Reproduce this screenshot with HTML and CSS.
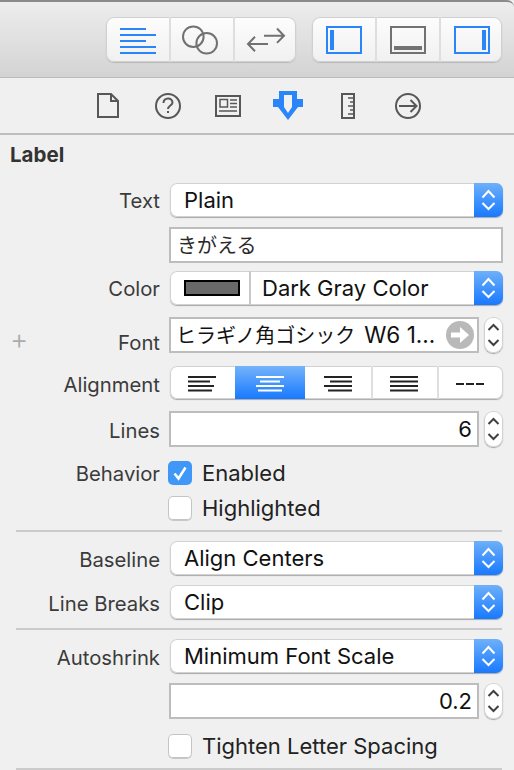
FILE: index.html
```html
<!DOCTYPE html>
<html lang="en">
<head>
<meta charset="utf-8">
<title>Label inspector</title>
<link rel="stylesheet" href="styles.css">
</head>
<body>
<div class="window">
  <header class="toolbar">
    <div class="seg-group">
      <div class="tool-cell"><svg viewBox="106 17 65 45" class="tool-svg"><path d="M120 29h26M120 35h36M120 41h26M120 47h36M120 53h36" class="s-blue"/></svg></div>
      <div class="tool-cell"><svg viewBox="171 17 64 45" class="tool-svg"><circle cx="193.3" cy="36.7" r="10.3" class="s-gray"/><circle cx="206.7" cy="43.3" r="10.3" class="s-gray"/></svg></div>
      <div class="tool-cell tool-cell-last"><svg viewBox="235 17 61 45" class="tool-svg"><path d="M264 35.7h19.500M277 28.500l7 7.200-7 7.200M268 44h-19.500M255 36.800l-7 7.200 7 7.200" class="s-gray"/></svg></div>
    </div>
    <div class="seg-group">
      <div class="tool-cell"><svg viewBox="312 17 65 45" class="tool-svg"><rect x="327" y="27" width="34" height="26" class="s-blue"/><rect x="330" y="30" width="4" height="20" class="f-blue"/></svg></div>
      <div class="tool-cell"><svg viewBox="377 17 64 45" class="tool-svg"><rect x="391" y="27" width="34" height="26" class="s-gray"/><rect x="394" y="46" width="28" height="4" class="f-gray"/></svg></div>
      <div class="tool-cell tool-cell-last"><svg viewBox="441 17 61 45" class="tool-svg"><rect x="455" y="27" width="34" height="26" class="s-blue"/><rect x="482" y="30" width="4" height="20" class="f-blue"/></svg></div>
    </div>
  </header>

  <nav class="tabs">
    <svg viewBox="78 88 60 36" class="tab-svg"><path d="M98 94h13l7 7v16H98zM111 94v7h7" class="s-dark"/></svg>
    <svg viewBox="138 88 60 36" class="tab-svg"><circle cx="168" cy="106" r="12" class="s-dark"/><path d="M163.500 103c0-6 9-6 9 -.500 0 3-4.500 3-4.500 6.500" class="s-dark"/><rect x="167" y="111" width="2" height="2" class="f-dark"/></svg>
    <svg viewBox="198 88 60 36" class="tab-svg"><rect x="216" y="96" width="24" height="20" class="s-dark"/><rect x="220" y="99.500" width="7.500" height="7.500" class="s-dark-thin"/><path d="M230 100h7M230 103.500h7M230 107h7M219 111h18" class="s-dark-thin"/></svg>
    <svg viewBox="258 88 60 36" class="tab-svg"><path d="M279 91H297V99H303V107H298L288 120L278 107H273V99H279ZM284 95V107L288 113L292 107V95Z" class="f-blue-odd"/></svg>
    <svg viewBox="318 88 60 36" class="tab-svg"><rect x="342" y="94" width="12" height="24" class="s-dark"/><path d="M348 98h5M350 102h3M348 106h5M350 110h3M348 114h5" class="s-dark-thin"/></svg>
    <svg viewBox="378 88 60 36" class="tab-svg"><circle cx="408" cy="106" r="12" class="s-dark"/><path d="M399 106h17M410.500 100l6 6-6 6" class="s-dark"/></svg>
  </nav>

  <main class="inspector">
    <h1 class="section-title">Label</h1>

    <div class="row row-text">
      <span class="label">Text</span>
      <div class="select"><span class="select-value">Plain</span><span class="select-arrows"><svg viewBox="0 0 29 34" class="arrows-svg"><path d="M8.500 14.500l6-6.500 6 6.500M8.500 20l6 6 6-6"/></svg></span></div>
    </div>

    <div class="row row-gap-10">
      <span class="label"></span>
      <div class="field field-full">きがえる</div>
    </div>

    <div class="row row-gap-8">
      <span class="label">Color</span>
      <div class="select">
        <span class="swatch-cell"><span class="swatch"></span></span>
        <span class="select-value select-value-color">Dark Gray Color</span>
        <span class="select-arrows"><svg viewBox="0 0 29 34" class="arrows-svg"><path d="M8.500 14.500l6-6.500 6 6.500M8.500 20l6 6 6-6"/></svg></span>
      </div>
    </div>

    <div class="row row-gap-12 row-font">
      <span class="plus">+</span>
      <span class="label label-low">Font</span>
      <div class="combo">
        <div class="field field-font"><span class="font-name">ヒラギノ角ゴシック<span class="font-latin">W6 1...</span></span><svg viewBox="0 0 28 28" class="go-svg"><circle cx="14" cy="14" r="14" class="go-disc"/><path d="M5 11.500h9V6l9 8-9 8v-5.500H5z" class="go-arrow"/></svg></div>
        <div class="stepper"><svg viewBox="0 0 19 36" class="stepper-svg"><path d="M4.500 13l5-5 5 5M4.500 23l5 5 5-5"/></svg></div>
      </div>
    </div>

    <div class="row row-gap-13 row-align">
      <span class="label label-down">Alignment</span>
      <div class="align-group">
        <div class="align-cell align-first"><svg viewBox="0 0 65 33" class="align-svg"><path d="M18 11h28M18 15.500h22M18 20h26M18 24.500h24"/></svg></div>
        <div class="align-cell align-on"><svg viewBox="0 0 70 33" class="align-svg-w"><path d="M21 11h28M25 15.500h20M21 20h28M23 24.500h24"/></svg></div>
        <div class="align-cell align-mid"><svg viewBox="0 0 68 33" class="align-svg"><path d="M19 11h28M25 15.500h22M19 20h28M23 24.500h24"/></svg></div>
        <div class="align-cell align-mid"><svg viewBox="0 0 66 33" class="align-svg"><path d="M17 11h28M17 15.500h28M17 20h28M17 24.500h28"/></svg></div>
        <div class="align-cell"><svg viewBox="0 0 63 33" class="align-svg"><path d="M17 18h8M27 18h8M37 18h8"/></svg></div>
      </div>
    </div>

    <div class="row row-gap-12">
      <span class="label label-down">Lines</span>
      <div class="combo">
        <div class="field field-num">6</div>
        <div class="stepper"><svg viewBox="0 0 19 36" class="stepper-svg"><path d="M4.500 13l5-5 5 5M4.500 23l5 5 5-5"/></svg></div>
      </div>
    </div>

    <div class="row row-check row-gap-13">
      <span class="label">Behavior</span>
      <div class="check-line"><span class="check check-on"><svg viewBox="0 0 24 24" class="check-svg"><path d="M6.500 12.500l4 5 7-11"/></svg></span><span class="check-text">Enabled</span></div>
    </div>

    <div class="row row-check row-gap-12">
      <span class="label"></span>
      <div class="check-line"><span class="check"></span><span class="check-text">Highlighted</span></div>
    </div>

    <hr class="divider divider-a">

    <div class="row">
      <span class="label label-down">Baseline</span>
      <div class="select"><span class="select-value">Align Centers</span><span class="select-arrows"><svg viewBox="0 0 29 34" class="arrows-svg"><path d="M8.500 14.500l6-6.500 6 6.500M8.500 20l6 6 6-6"/></svg></span></div>
    </div>

    <div class="row row-gap-10">
      <span class="label label-down">Line Breaks</span>
      <div class="select"><span class="select-value">Clip</span><span class="select-arrows"><svg viewBox="0 0 29 34" class="arrows-svg"><path d="M8.500 14.500l6-6.500 6 6.500M8.500 20l6 6 6-6"/></svg></span></div>
    </div>

    <hr class="divider divider-b">

    <div class="row">
      <span class="label label-down">Autoshrink</span>
      <div class="select"><span class="select-value">Minimum Font Scale</span><span class="select-arrows"><svg viewBox="0 0 29 34" class="arrows-svg"><path d="M8.500 14.500l6-6.500 6 6.500M8.500 20l6 6 6-6"/></svg></span></div>
    </div>

    <div class="row row-gap-10">
      <span class="label"></span>
      <div class="combo">
        <div class="field field-num">0.2</div>
        <div class="stepper"><svg viewBox="0 0 19 36" class="stepper-svg"><path d="M4.500 13l5-5 5 5M4.500 23l5 5 5-5"/></svg></div>
      </div>
    </div>

    <div class="row row-check row-gap-15">
      <span class="label"></span>
      <div class="check-line"><span class="check"></span><span class="check-text">Tighten Letter Spacing</span></div>
    </div>

    <hr class="divider divider-c">
  </main>
</div>
</body>
</html>
```

FILE: styles.css
```css
* { box-sizing: border-box; }

html, body {
  margin: 0;
  padding: 0;
  background: #f0f0f0;
}

body {
  width: 514px;
  height: 770px;
  overflow: hidden;
  font-family: Inter, "Noto Sans CJK JP", sans-serif;
  color: #1c1c1c;
}

/* Toolbar */
.toolbar {
  height: 78px;
  display: flex;
  gap: 16px;
  padding: 15px 0 0 106px;
  border-top: 2px solid #8b8b8b;
  border-bottom: 1px solid #b9b9b9;
  border-top-right-radius: 7px;
  background: linear-gradient(#ededed, #d3d3d3);
}

.seg-group {
  width: 190px;
  height: 45px;
  display: grid;
  grid-template-columns: 65px 64px 61px;
  border-radius: 8px;
  background: linear-gradient(#fdfdfd, #f0f0f0);
  box-shadow: inset 0 0 0 1px #d0d0d0, 0 1px 1px #b8b8b8;
}

.tool-cell { box-shadow: inset -2px 0 0 #dedede; }
.tool-cell-last { box-shadow: none; }
.tool-svg { display: block; width: 100%; height: 45px; }

.s-blue, .s-gray, .s-dark, .s-dark-thin { fill: none; stroke-width: 2; }
.s-blue { stroke: #2a85fb; }
.s-gray { stroke: #717171; }
.s-dark { stroke: #575757; }
.s-dark-thin { stroke: #575757; stroke-width: 1.5; }
.f-blue { fill: #2a85fb; }
.f-gray { fill: #717171; }
.f-dark { fill: #575757; }
.f-blue-odd { fill: #2a85fb; fill-rule: evenodd; }

/* Inspector tabs */
.tabs {
  height: 57px;
  display: flex;
  padding: 10px 0 0 78px;
  border-bottom: 2px solid #bdbdbd;
  align-items: flex-start;
}

.tab-svg { display: block; width: 60px; height: 36px; flex: none; }

/* Inspector body */
.inspector {
  position: relative;
  padding: 8px 11px 0 0;
}

.section-title {
  margin: 0 0 16px 10px;
  height: 24px;
  font-size: 20.500px;
  line-height: 24px;
  font-weight: 700;
  color: #333;
}

.row {
  display: grid;
  grid-template-columns: 160px 334px;
  column-gap: 9px;
  align-items: center;
}

.row-gap-8 { margin-top: 8px; }
.row-gap-10 { margin-top: 10px; }
.row-gap-12 { margin-top: 12px; }
.row-gap-13 { margin-top: 13px; }
.row-gap-15 { margin-top: 15px; }

.row-font { position: relative; }

.label {
  display: block;
  text-align: right;
  font-size: 20.300px;
  line-height: 24px;
  padding-top: 2px;
  color: #3b3b3b;
}

.label-down { padding-top: 4px; }

.label-low {
  padding-top: 16px;
  line-height: 20px;
}

.plus {
  position: absolute;
  left: 10px;
  top: 7px;
  font-size: 28px;
  line-height: 30px;
  color: #ababab;
  font-weight: 300;
}

/* Popup select */
.select {
  height: 34px;
  margin-left: 1px;
  display: flex;
  align-items: center;
  border-radius: 7px;
  background: #fff;
  overflow: hidden;
  box-shadow: inset 0 0 0 1px #d2d2d2, 0 1px 1px #a8a8a8;
}

.select-value {
  flex: 1;
  padding-left: 14px;
  font-size: 22px;
  line-height: 34px;
  white-space: nowrap;
  color: #111;
}

.select-value-color { padding-left: 11px; }

.select-arrows {
  width: 29px;
  height: 34px;
  flex: none;
  background: linear-gradient(#6eb0fa, #1879ff);
}

.arrows-svg {
  display: block;
  width: 29px;
  height: 34px;
  fill: none;
  stroke: #fff;
  stroke-width: 2;
}

.swatch-cell {
  width: 81px;
  height: 34px;
  flex: none;
  display: flex;
  align-items: center;
  padding-left: 14px;
  border-right: 2px solid #c9c9c9;
}

.swatch {
  width: 56px;
  height: 16px;
  background: #686868;
  border: 2px solid #000;
}

/* Text fields */
.field {
  height: 36px;
  background: #fff;
  border: 2px solid #bdbdbd;
  font-size: 22px;
  line-height: 32px;
  color: #111;
  white-space: nowrap;
}

.field-full {
  padding-left: 6px;
  font-size: 20px;
  line-height: 35px;
  color: #2a2a2a;
}

.field-num {
  flex: 1;
  text-align: right;
  padding-right: 5px;
}

.field-font {
  flex: 1;
  display: flex;
  align-items: center;
  justify-content: space-between;
  padding: 0 3px 0 5px;
  font-size: 20px;
}

.font-name { color: #111; }
.font-latin { font-size: 22.500px; margin-left: 9px; }
.go-svg { width: 28px; height: 28px; flex: none; }
.go-disc { fill: #b9b9b9; }
.go-arrow { fill: #fff; }

.combo {
  display: flex;
  gap: 5px;
  align-items: center;
}

.stepper {
  width: 19px;
  height: 36px;
  flex: none;
  border-radius: 9px;
  background: #fff;
  box-shadow: inset 0 0 0 1px #d2d2d2, 0 1px 1px #a8a8a8;
}

.stepper-svg {
  display: block;
  width: 19px;
  height: 36px;
  fill: none;
  stroke: #404040;
  stroke-width: 2;
}

/* Alignment segments */
.align-group {
  height: 33px;
  margin-left: 1px;
  display: grid;
  grid-template-columns: 65px 70px 68px 66px 63px;
  border-radius: 7px;
  overflow: hidden;
  background: #fff;
  box-shadow: inset 0 0 0 1px #d2d2d2, 0 1px 1px #a8a8a8;
}

.align-on { background: linear-gradient(#74b3fb, #1879ff); }
.align-mid { box-shadow: inset -2px 0 0 #dfdfdf; }

.align-svg, .align-svg-w {
  display: block;
  width: 100%;
  height: 33px;
  fill: none;
  stroke-width: 2;
}

.align-svg { stroke: #232323; }
.align-svg-w { stroke: #fff; }

/* Checkboxes */
.row-check { height: 24px; }

.check-line {
  display: flex;
  align-items: center;
  gap: 10px;
  margin-left: -1px;
}

.check {
  width: 24px;
  height: 24px;
  flex: none;
  border-radius: 5px;
  background: #fff;
  box-shadow: inset 0 0 0 1px #c4c4c4, 0 1px 0 #c8c8c8;
}

.check-on {
  background: #3f97f7;
  box-shadow: none;
}

.check-svg {
  display: block;
  width: 24px;
  height: 24px;
  fill: none;
  stroke: #fff;
  stroke-width: 2.500;
}

.check-text {
  font-size: 22px;
  line-height: 24px;
  color: #222;
  white-space: nowrap;
}

/* Dividers */
.divider {
  height: 2px;
  border: 0;
  margin: 0 0 0 16px;
  width: 486px;
  background: #cbcbcb;
}

.divider-a { margin-top: 10px; margin-bottom: 9px; }
.divider-b { margin-top: 9px; margin-bottom: 9px; }
.divider-c { margin-top: 10px; }
```
